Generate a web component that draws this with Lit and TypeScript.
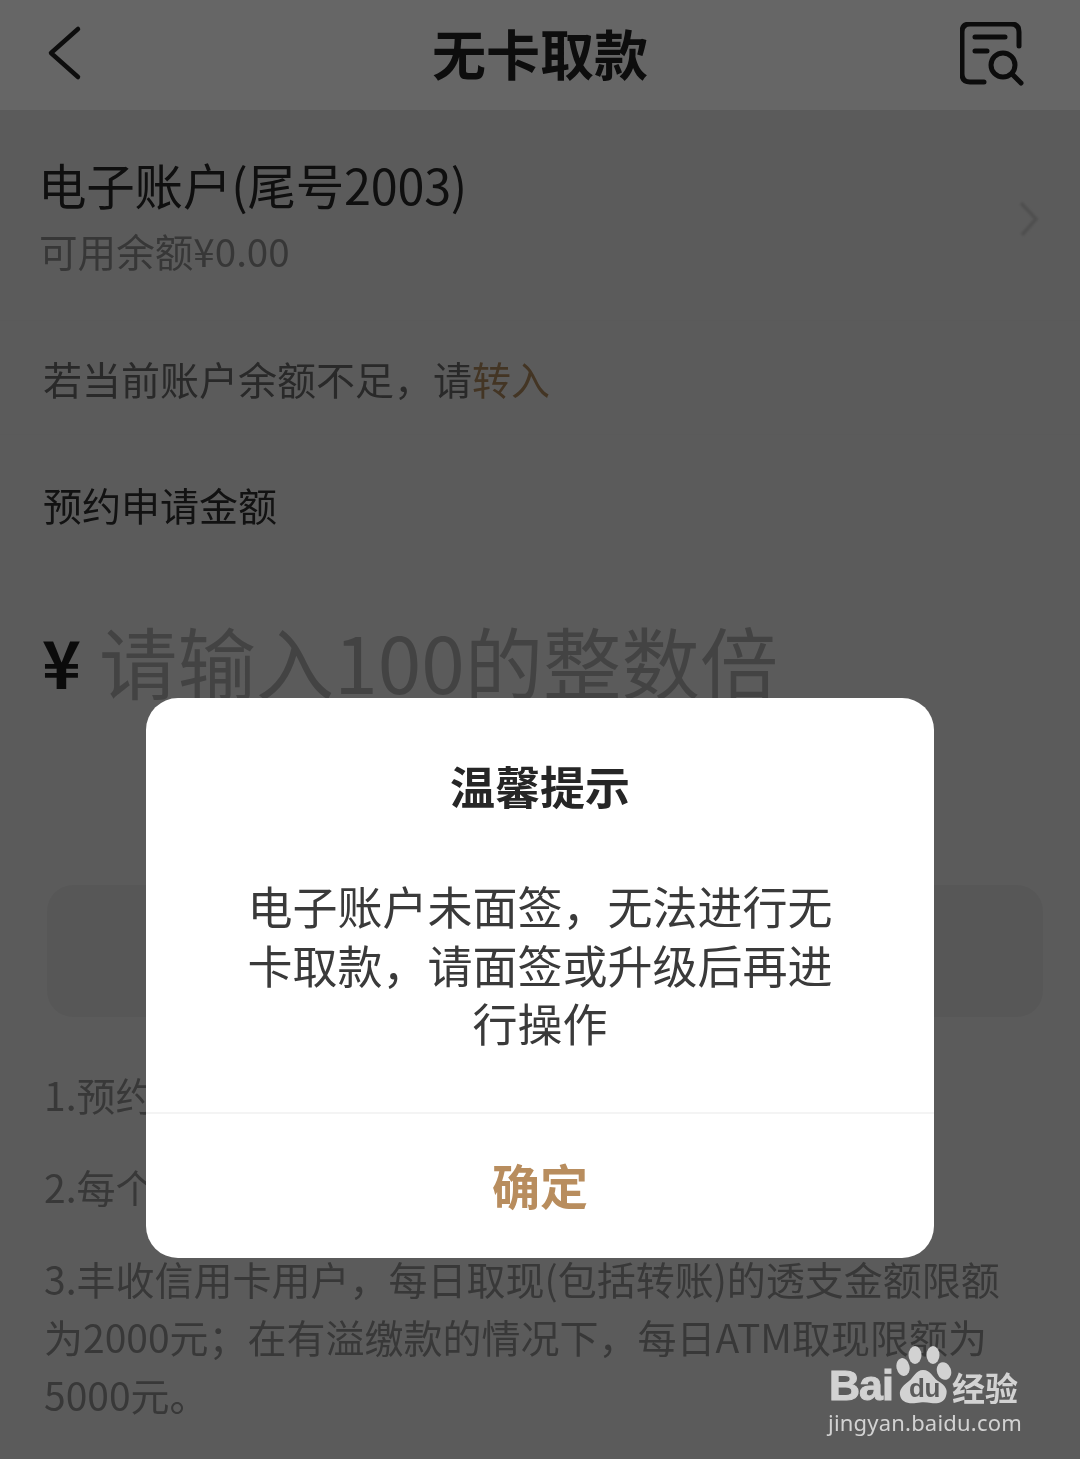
import { LitElement, html, css } from "lit";
import { customElement } from "lit/decorators.js";

@customElement("app-root")
export class AppRoot extends LitElement {
  static styles = css`
    :host { display: block; position: relative; width: 1080px; height: 1459px; overflow: hidden; background: #e4e4e4;
      font-family: "Noto Sans CJK SC", "Noto Sans", sans-serif; }
    .page { height: 1459px; display: flex; flex-direction: column; filter: blur(0.6px); color: #303030; }
    .nav { flex: none; height: 110px; background: #fff; display: grid; grid-template-columns: 1fr auto 1fr; align-items: center; padding: 0 50px; }
    .nav .back { margin-left: -4px; }
    .nav .right { justify-self: end; margin-right: 4px; }
    .title { font-size: 54px; font-weight: 700; color: #222; line-height: 106px; height: 110px; }
    .acct { flex: none; height: 210px; box-sizing: border-box; padding: 44px 40px 0 38px; display: flex; justify-content: space-between; align-items: flex-start; }
    .acct-name { font-size: 48.5px; line-height: 60px; color: #262626; letter-spacing: -0.2px; white-space: nowrap; }
    .acct-sub { font-size: 38.6px; line-height: 48px; margin-top: 12px; color: #8a8a8a; margin-left: 1px; }
    .chev { margin-top: 46px; filter: blur(0.8px); }
    .notice { flex: none; height: 115px; box-sizing: border-box; padding: 0 43px; display: flex; align-items: center; font-size: 39px; color: #666; border-top: 1px solid #e0e0e0; border-bottom: 1px solid #e0e0e0; }
    .notice b { font-weight: 400; color: #a9845a; }
    .form { flex: none; padding: 43px 43px 0; height: 450px; box-sizing: border-box; }
    .label { font-size: 39px; line-height: 52px; color: #2e2e2e; }
    .amount { display: flex; align-items: center; margin-top: 80px; height: 100px; }
    .yen { font-size: 66px; font-weight: 700; color: #1c1c1c; width: 57px; margin-left: -1px; }
    .ph { font-size: 78.4px; color: #a8a8a8; white-space: nowrap; }
    .btn { flex: none; margin: 0 37px 0 47px; height: 132px; background: #dadada; border-radius: 26px; }
    .tips { flex: none; padding: 48px 44px 0; font-size: 39px; color: #8c8c8c; line-height: 58px; }
    .tips div { margin-bottom: 34px; }
    .scrim { position: absolute; inset: 0; background: rgba(0,0,0,0.6); display: flex; justify-content: center; align-items: flex-start; padding-top: 698px; box-sizing: border-box; }
    .dialog { width: 788px; height: 560px; background: #fff; border-radius: 32px; display: flex; flex-direction: column; }
    .d-body { flex: none; height: 416px; box-sizing: border-box; border-bottom: 2px solid #f4f4f4; padding-top: 58px; text-align: center; }
    .d-title { font-size: 45px; line-height: 60px; font-weight: 700; color: #262626; filter: blur(0.4px); }
    .d-text { width: 600px; margin: 61px auto 0; font-size: 45px; line-height: 58.5px; color: #3a3a3a; filter: blur(0.4px); }
    .d-ok { flex: 1; display: flex; align-items: center; justify-content: center; font-size: 48px; font-weight: 700; color: #b88d5e; padding-bottom: 4px; filter: blur(0.4px); }
    .wm { position: absolute; left: 828px; top: 1344px; width: 200px; height: 100px; color: #d2d2d2; }
    .wm svg { position: absolute; left: 68px; top: 0; }
    .wm-bai { position: absolute; left: 1px; top: 17px; font: 700 43px/48px "Liberation Sans", sans-serif; -webkit-text-stroke: 1px #d2d2d2; letter-spacing: -1px; }
    .wm-du { position: absolute; left: 81px; top: 30px; font: 700 26px/28px "Liberation Sans", sans-serif; color: #5b5b5b; letter-spacing: -0.5px; }
    .wm-cn { position: absolute; left: 124px; top: 21px; font-size: 33px; line-height: 44px; font-weight: 700; white-space: nowrap; }
    .wm-url { position: absolute; left: 0; top: 64px; font: 400 22px/28px "Noto Sans", sans-serif; white-space: nowrap; letter-spacing: 0.2px; }
  `;

  render() {
    return html`
      <div class="page">
        <div class="nav">
          <svg class="back" width="38" height="60" viewBox="0 0 38 60" fill="none" stroke="#222" stroke-width="4.5" stroke-linecap="round" stroke-linejoin="round"><path d="M32 4 L5 28 L32 52"/></svg>
          <div class="title">无卡取款</div>
          <svg class="right" width="66" height="66" viewBox="0 0 66 66" fill="none" stroke="#1e1e1e" stroke-width="5" stroke-linecap="round"><path d="M59 24 V10 Q59 2 51 2 H10 Q2 2 2 10 V52 Q2 60 10 60 H24"/><path d="M15 15 H45 M15 29 H27"/><circle cx="43" cy="43" r="12"/><path d="M53 53 L61 61"/></svg>
        </div>
        <div class="acct">
          <div>
            <div class="acct-name">电子账户(尾号2003)</div>
            <div class="acct-sub">可用余额¥0.00</div>
          </div>
          <svg class="chev" width="22" height="38" viewBox="0 0 22 38" fill="none" stroke="#c4c4c4" stroke-width="3.5"><path d="M3 3 L18 19 L4 35"/></svg>
        </div>
        <div class="notice">若当前账户余额不足，请<b>转入</b></div>
        <div class="form">
          <div class="label">预约申请金额</div>
          <div class="amount"><span class="yen">¥</span><span class="ph">请输入100的整数倍</span></div>
        </div>
        <div class="btn"></div>
        <div class="tips">
          <div>1.预约申请金额</div>
          <div>2.每个账户每日</div>
          <div>3.丰收信用卡用户，每日取现(包括转账)的透支金额限额为2000元；在有溢缴款的情况下，每日ATM取现限额为5000元。</div>
        </div>
      </div>
      <div class="scrim">
        <div class="dialog">
          <div class="d-body">
            <div class="d-title">温馨提示</div>
            <div class="d-text">电子账户未面签，无法进行无卡取款，请面签或升级后再进行操作</div>
          </div>
          <div class="d-ok">确定</div>
        </div>
      </div>
      <div class="wm">
        <svg width="56" height="62" viewBox="0 0 56 62" fill="currentColor"><ellipse cx="19" cy="11" rx="6.5" ry="9"/><ellipse cx="37" cy="11" rx="6.5" ry="9"/><ellipse cx="7" cy="23" rx="6.5" ry="9" transform="rotate(-12 7 23)"/><ellipse cx="48" cy="27" rx="7" ry="9" transform="rotate(-20 48 27)"/><path d="M27 26 C35 26 36 33 42 37 C50 42 52 46 50 52 C48 59 41 60 35 59 C30 58 26 58 20 59 C12 60 5 58 4 51 C3 45 8 41 13 37 C18 33 20 26 27 26 Z"/></svg>
        <span class="wm-bai">Bai</span>
        <span class="wm-du">du</span>
        <span class="wm-cn">经验</span>
        <span class="wm-url">jingyan.baidu.com</span>
      </div>
    `;
  }
}
